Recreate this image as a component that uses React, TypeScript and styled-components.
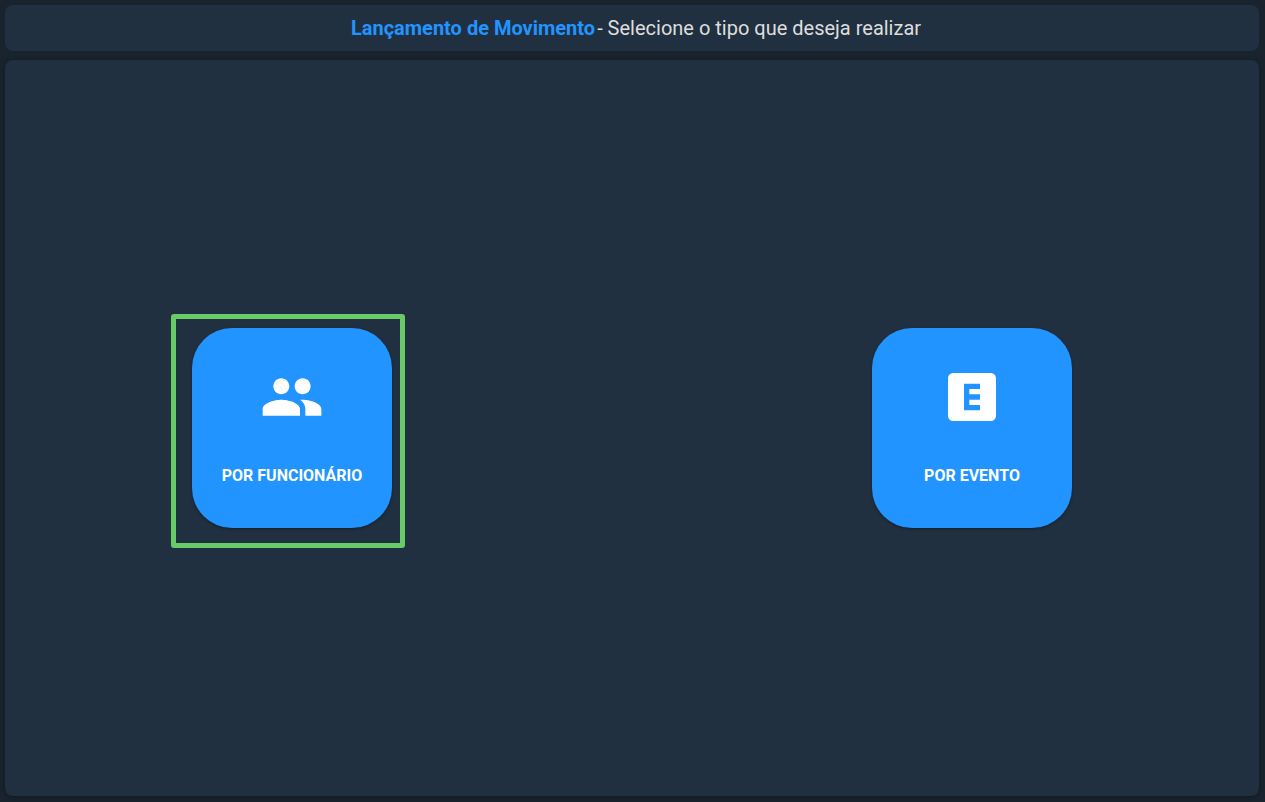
import React from "react";
import type { IconType } from "react-icons";
import { MdExplicit, MdPeople } from "react-icons/md";
import styled, { createGlobalStyle, css } from "styled-components";

const GlobalStyle = createGlobalStyle`
  *, *::before, *::after {
    box-sizing: border-box;
  }

  body {
    margin: 0;
    background: #19232d;
    color: #dedede;
    font-family: Roboto, "Liberation Sans", sans-serif;
  }
`;

const Page = styled.div`
  display: flex;
  flex-direction: column;
  gap: 9px;
  min-height: 100vh;
  padding: 5px 6px 6px 5px;
`;

const panel = css`
  background: #213040;
  border-radius: 8px;
`;

const Header = styled.header`
  ${panel}
  display: flex;
  align-items: center;
  justify-content: center;
  padding: 11px 16px 11px 24px;
`;

const Title = styled.h1`
  margin: 0;
  font-size: 20px;
  font-weight: 400;
  line-height: 24px;
  text-align: center;
`;

const Accent = styled.strong`
  margin-right: 2px;
  color: #2194ff;
  font-weight: 700;
`;

const Options = styled.main`
  ${panel}
  flex: 1;
  display: grid;
  grid-template-columns: 187fr 200px 480fr 200px 187fr;
  align-items: center;
  box-shadow: 0 1px 4px rgba(0, 0, 0, 0.3);
`;

const Slot = styled.div<{ $column: number }>`
  position: relative;
  grid-column: ${({ $column }) => $column};
  grid-row: 1;
`;

const Tile = styled.button`
  display: flex;
  flex-direction: column;
  align-items: center;
  gap: 35px;
  width: 100%;
  height: 200px;
  padding: 37px 0 0;
  border: 0;
  border-radius: 40px;
  background: #2194ff;
  box-shadow: 0 1px 3px rgba(0, 0, 0, 0.4);
  color: #fff;
  font-family: inherit;
  font-size: 16px;
  font-weight: 700;
  line-height: 24px;
  text-transform: uppercase;
  cursor: pointer;
`;

const Highlight = styled.span`
  position: absolute;
  top: -14px;
  left: -21px;
  width: 234px;
  height: 234px;
  border: 5px solid #67cb67;
  border-radius: 3px;
  pointer-events: none;
`;

interface Option {
  label: string;
  icon: IconType;
  column: number;
  highlighted?: boolean;
}

const options: Option[] = [
  { label: "Por Funcionário", icon: MdPeople, column: 2, highlighted: true },
  { label: "Por Evento", icon: MdExplicit, column: 4 },
];

export default function App() {
  return (
    <>
      <GlobalStyle />
      <Page>
        <Header>
          <Title>
            <Accent>Lançamento de Movimento</Accent>- Selecione o tipo que deseja realizar
          </Title>
        </Header>
        <Options>
          {options.map(({ label, icon: Icon, column, highlighted }) => (
            <Slot key={label} $column={column}>
              <Tile type="button">
                <Icon size={64} aria-hidden />
                <span>{label}</span>
              </Tile>
              {highlighted && <Highlight />}
            </Slot>
          ))}
        </Options>
      </Page>
    </>
  );
}
